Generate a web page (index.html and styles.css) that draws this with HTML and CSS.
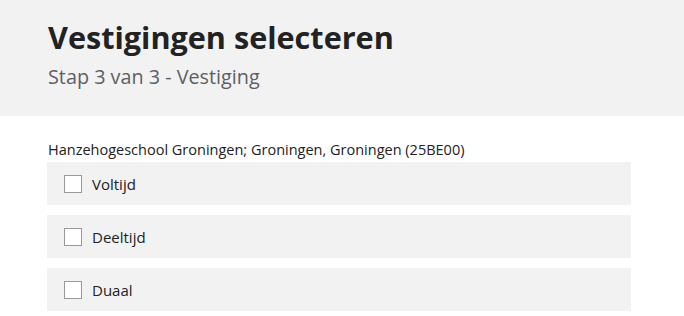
FILE: index.html
```html
<!DOCTYPE html>
<html lang="nl">
<head>
<meta charset="utf-8">
<title>Vestigingen selecteren</title>
<link rel="stylesheet" href="styles.css">
</head>
<body>
<header class="header">
  <h1 class="title">Vestigingen selecteren</h1>
  <p class="subtitle">Stap 3 van 3 - Vestiging</p>
</header>
<main class="content">
  <p class="location">Hanzehogeschool Groningen; Groningen, Groningen (25BE00)</p>
  <ul class="options">
    <li class="option"><label class="option-label"><span class="box"></span>Voltijd</label></li>
    <li class="option"><label class="option-label"><span class="box"></span>Deeltijd</label></li>
    <li class="option"><label class="option-label"><span class="box"></span>Duaal</label></li>
  </ul>
</main>
</body>
</html>
```
FILE: styles.css
```css
html, body {
  margin: 0;
  padding: 0;
  background: #ffffff;
}
body {
  font-family: "Open Sans", "Noto Sans", sans-serif;
  color: #222222;
}
.header {
  background: #f2f2f2;
  height: 116px;
  padding: 17px 48px 0;
  box-sizing: border-box;
}
.title {
  margin: 0;
  font-size: 30.6px;
  line-height: 40px;
  font-weight: 700;
  color: #222222;
}
.subtitle {
  margin: 6px 0 0;
  font-size: 19.8px;
  line-height: 28px;
  color: #5c6066;
}
.content {
  padding: 24px 53px 0 47px;
}
.location {
  margin: 0 0 2px 1px;
  font-size: 14.5px;
  line-height: 20px;
  color: #222222;
}
.options {
  list-style: none;
  margin: 0;
  padding: 0;
  display: flex;
  flex-direction: column;
  gap: 10px;
  width: 584px;
}
.option {
  background: #f2f2f2;
  height: 43px;
  display: flex;
  align-items: center;
  padding-left: 17px;
}
.option-label {
  display: flex;
  align-items: center;
  gap: 10px;
  font-size: 15px;
  color: #222222;
}
.box {
  width: 16px;
  height: 16px;
  border: 1px solid #999999;
  background: #ffffff;
}
```
